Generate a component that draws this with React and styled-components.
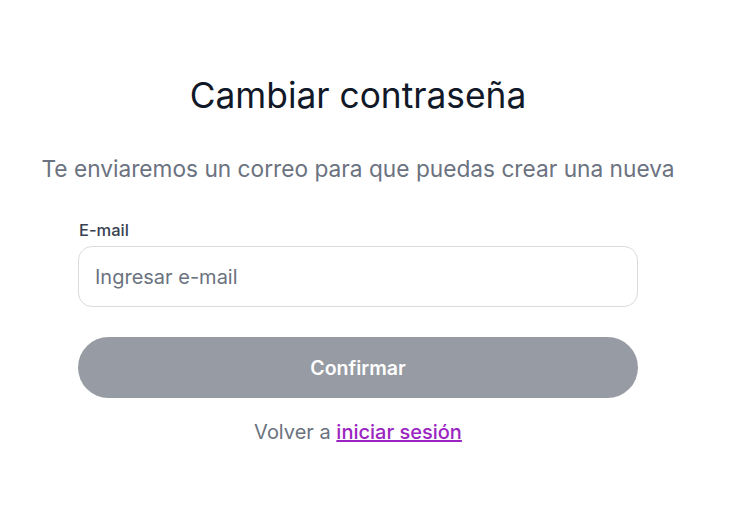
import React from "react";
import styled, { createGlobalStyle } from "styled-components";

const Global = createGlobalStyle`
  html, body { margin: 0; padding: 0; background: #ffffff; }
  body { font-family: Inter, "Noto Sans", sans-serif; }
  * { box-sizing: border-box; }
`;

const Page = styled.main`
  width: 716px;
  display: flex;
  flex-direction: column;
  align-items: center;
  padding-top: 74px;
`;

const Title = styled.h1`
  margin: 0;
  font-family: Inter, sans-serif;
  font-weight: 400;
  font-size: 35.3px;
  line-height: 44px;
  color: #111827;
`;

const Subtitle = styled.p`
  margin: 37px 0 0;
  font-size: 22.7px;
  line-height: 28px;
  color: #6b7280;
  white-space: nowrap;
  text-align: center;
`;

const Form = styled.form`
  width: 560px;
  margin-top: 37px;
  display: flex;
  flex-direction: column;
`;

const Label = styled.label`
  font-size: 16.5px;
  font-weight: 500;
  line-height: 20px;
  color: #374151;
  margin-bottom: 6px;
  padding-left: 1px;
`;

const Input = styled.input`
  height: 61px;
  width: 100%;
  border: 1px solid #d9dbe1;
  border-radius: 14px;
  padding: 0 16px;
  font-family: Inter, sans-serif;
  font-size: 20px;
  color: #111827;
  outline: none;
  &::placeholder { color: #6b7280; }
`;

const Button = styled.button`
  margin-top: 30px;
  height: 61px;
  width: 100%;
  border: none;
  border-radius: 31px;
  background: #979ba4;
  color: #ffffff;
  font-family: Inter, sans-serif;
  font-size: 19.5px;
  font-weight: 600;
`;

const Footer = styled.p`
  margin: 22px 0 0;
  text-align: center;
  font-size: 20px;
  line-height: 24px;
  color: #6b7280;
`;

const Link = styled.a`
  color: #9b25c0;
  text-decoration: underline;
  font-weight: 500;
`;

export default function App() {
  return (
    <>
      <Global />
      <Page>
        <Title>Cambiar contraseña</Title>
        <Subtitle>Te enviaremos un correo para que puedas crear una nueva</Subtitle>
        <Form onSubmit={(e) => e.preventDefault()}>
          <Label htmlFor="email">E-mail</Label>
          <Input id="email" type="email" placeholder="Ingresar e-mail" />
          <Button type="submit">Confirmar</Button>
          <Footer>
            Volver a <Link href="#">iniciar sesión</Link>
          </Footer>
        </Form>
      </Page>
    </>
  );
}
